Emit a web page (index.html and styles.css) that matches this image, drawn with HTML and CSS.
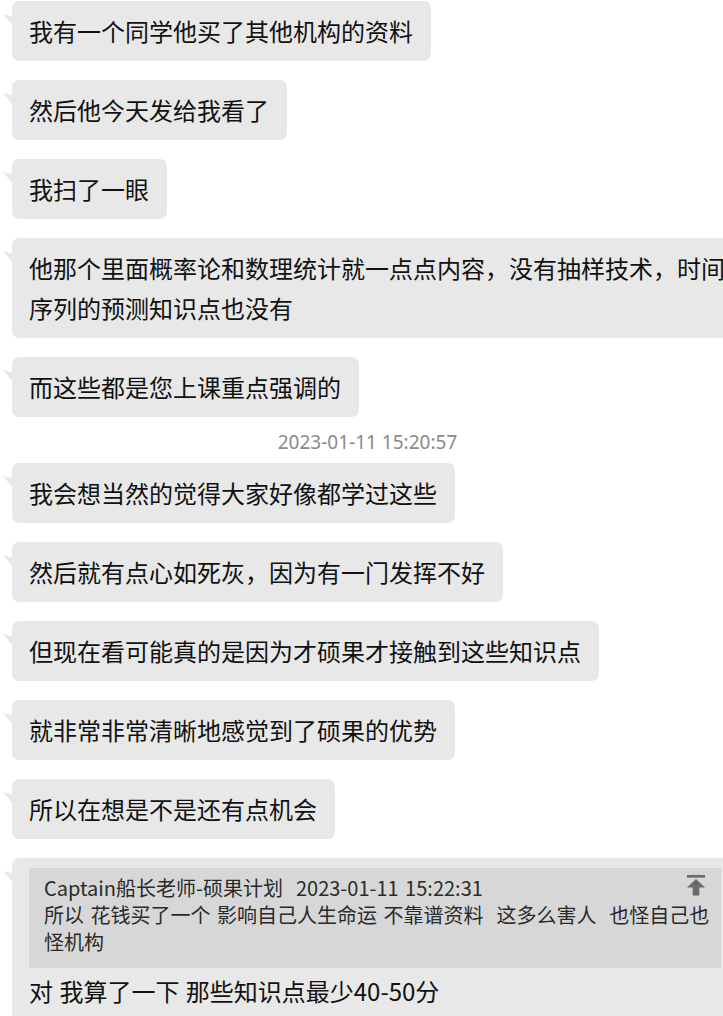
FILE: index.html
```html
<!DOCTYPE html>
<html lang="zh-CN">
<head>
<meta charset="utf-8">
<title>聊天记录</title>
<link rel="stylesheet" href="styles.css">
</head>
<body>
<div class="chat">
  <div class="bubble">我有一个同学他买了其他机构的资料</div>
  <div class="bubble">然后他今天发给我看了</div>
  <div class="bubble">我扫了一眼</div>
  <div class="bubble">他那个里面概率论和数理统计就一点点内容，没有抽样技术，时间序列的预测知识点也没有</div>
  <div class="bubble">而这些都是您上课重点强调的</div>
  <div class="time">2023-01-11 15:20:57</div>
  <div class="bubble">我会想当然的觉得大家好像都学过这些</div>
  <div class="bubble">然后就有点心如死灰，因为有一门发挥不好</div>
  <div class="bubble">但现在看可能真的是因为才硕果才接触到这些知识点</div>
  <div class="bubble">就非常非常清晰地感觉到了硕果的优势</div>
  <div class="bubble">所以在想是不是还有点机会</div>
  <div class="bubble bubble-quote">
    <div class="quote">
      <div class="quote-head">Captain船长老师-硕果计划  2023-01-11 15:22:31</div>
      <div class="quote-text">所以 花钱买了一个 影响自己人生命运 不靠谱资料  这多么害人  也怪自己也怪机构</div>
      <svg class="quote-icon" viewBox="0 0 20 22" width="20" height="22" aria-hidden="true">
        <rect x="1" y="1" width="18" height="2.6" fill="#6b6b6b"/>
        <polygon points="10,5 19,13.5 13.3,13.5 13.3,21.5 6.7,21.5 6.7,13.5 1,13.5" fill="#6b6b6b"/>
      </svg>
    </div>
    <div class="reply">对 我算了一下 那些知识点最少40-50分</div>
  </div>
</div>
</body>
</html>
```

FILE: styles.css
```css
html, body {
  margin: 0;
  padding: 0;
  background: #ffffff;
  overflow: hidden;
}

body {
  width: 723px;
  height: 1016px;
  font-family: "Noto Sans CJK SC", "Noto Sans", sans-serif;
  color: #111111;
}

.chat {
  display: flex;
  flex-direction: column;
  align-items: flex-start;
  gap: 19px;
  padding: 1px 0 0 12px;
}

.bubble {
  position: relative;
  box-sizing: border-box;
  width: max-content;
  max-width: 736px;
  padding: 10px 18px 10px 17px;
  background: #e8e8e8;
  border-radius: 7px;
  font-size: 24px;
  line-height: 40px;
}

.bubble::before {
  content: "";
  position: absolute;
  left: -9px;
  top: 13px;
  width: 10px;
  height: 12px;
  background: #e8e8e8;
  clip-path: polygon(0 0, 100% 20%, 100% 100%);
}

.time {
  align-self: center;
  margin: -6px 0 -10px 0;
  font-size: 19px;
  line-height: 24px;
  color: #8a8a8a;
  font-family: "Noto Sans", "Noto Sans CJK SC", sans-serif;
}

.bubble-quote {
  width: 736px;
}

.quote {
  position: relative;
  margin-right: 9px;
  padding: 6px 8px 13px 15px;
  background: #d7d7d8;
  font-size: 20px;
  line-height: 27px;
  color: #2a2a2a;
}

.quote-head,
.quote-text {
  white-space: pre-wrap;
  word-spacing: 2px;
}

.quote-icon {
  position: absolute;
  top: 6px;
  right: 15px;
}

.reply {
  margin-top: 3px;
  word-spacing: 1px;
}
```
